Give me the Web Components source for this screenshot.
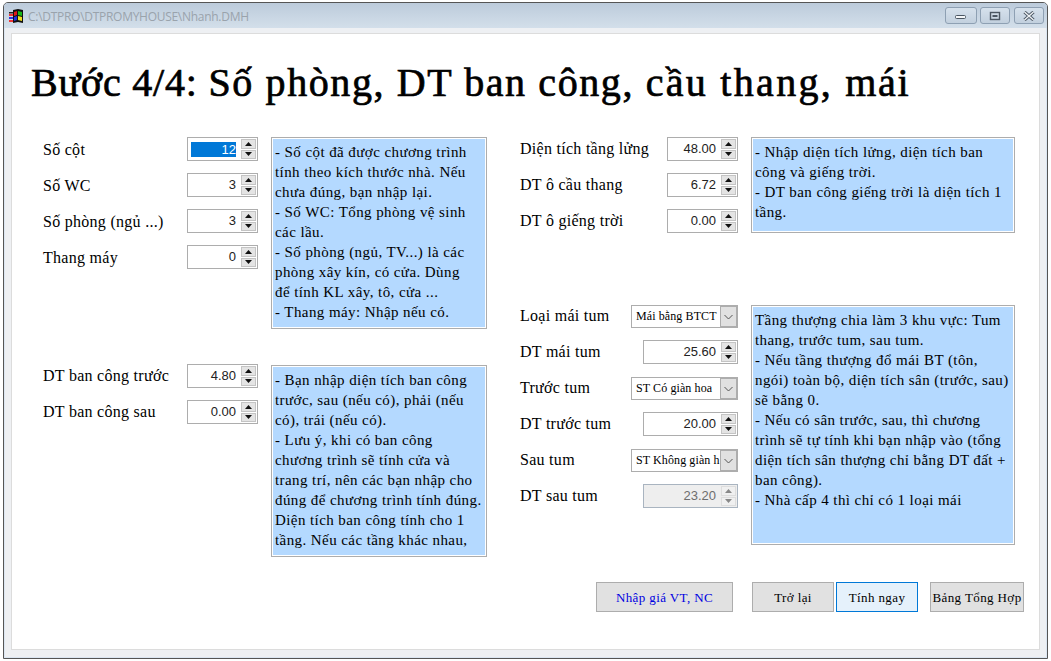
<!DOCTYPE html>
<html>
<head>
<meta charset="utf-8">
<style>
  html, body { margin: 0; background: #fff; }
  body { font-family: "Liberation Serif", "Times New Roman", serif; color: #000; }
</style>
</head>
<body>
<app-window title="C:\DTPRO\DTPROMYHOUSE\Nhanh.DMH">
  <step-heading><span style="letter-spacing:.8px">Bước 4/4: </span>Số phòng, DT ban công, <span style="letter-spacing:2.3px">cầu thang, </span>mái</step-heading>
  <div slot="left">
    <form-section style="--fields:215px;--note:216px;--note-h:192px;--label-top:1px">
      <field-row label="Số cột"><spin-box value="12" selected></spin-box></field-row>
      <field-row label="Số WC"><spin-box value="3"></spin-box></field-row>
      <field-row label="Số phòng (ngủ ...)"><spin-box value="3"></spin-box></field-row>
      <field-row label="Thang máy"><spin-box value="0"></spin-box></field-row>
      <note-box slot="note">- Số cột đã được chương trình<br>tính theo kích thước nhà. Nếu<br>chưa đúng, bạn nhập lại.<br>- Số WC: Tổng phòng vệ sinh<br>các lầu.<br>- Số phòng (ngủ, TV...) là các<br>phòng xây kín, có cửa. Dùng<br>để tính KL xây, tô, cửa ...<br>- Thang máy: Nhập nếu có.</note-box>
    </form-section>
    <form-section style="--fields:215px;--note:216px;--note-h:192px;--rows-top:-1px;margin-top:36px">
      <field-row label="DT ban công trước"><spin-box value="4.80"></spin-box></field-row>
      <field-row label="DT ban công sau"><spin-box value="0.00"></spin-box></field-row>
      <note-box slot="note">- Bạn nhập diện tích ban công<br>trước, sau (nếu có), phải (nếu<br>có), trái (nếu có).<br>- Lưu ý, khi có ban công<br>chương trình sẽ tính cửa và<br>trang trí, nên các bạn nhập cho<br>đúng để chương trình tính đúng.<br>Diện tích ban công tính cho 1<br>tầng. Nếu các tầng khác nhau,</note-box>
    </form-section>
  </div>
  <div slot="right">
    <form-section style="--fields:218px;--note:264px;--note-h:96px">
      <field-row label="Diện tích tầng lửng"><spin-box value="48.00"></spin-box></field-row>
      <field-row label="DT ô cầu thang"><spin-box value="6.72"></spin-box></field-row>
      <field-row label="DT ô giếng trời"><spin-box value="0.00"></spin-box></field-row>
      <note-box slot="note">- Nhập diện tích lửng, diện tích ban<br>công và giếng trời.<br>- DT ban công giếng trời là diện tích 1<br>tầng.</note-box>
    </form-section>
    <form-section style="--fields:218px;--note:264px;--note-h:240px;--rows-top:-1px;margin-top:72px">
      <field-row label="Loại mái tum"><combo-box value="Mái bằng BTCT"></combo-box></field-row>
      <field-row label="DT mái tum"><spin-box value="25.60" wide></spin-box></field-row>
      <field-row label="Trước tum"><combo-box value="ST Có giàn hoa"></combo-box></field-row>
      <field-row label="DT trước tum"><spin-box value="20.00" wide></spin-box></field-row>
      <field-row label="Sau tum"><combo-box value="ST Không giàn h"></combo-box></field-row>
      <field-row label="DT sau tum"><spin-box value="23.20" wide disabled></spin-box></field-row>
      <note-box slot="note">Tầng thượng chia làm 3 khu vực: Tum<br>thang, trước tum, sau tum.<br>- Nếu tầng thượng đổ mái BT (tôn,<br>ngói) toàn bộ, diện tích sân (trước, sau)<br>sẽ bằng 0.<br>- Nếu có sân trước, sau, thì chương<br>trình sẽ tự tính khi bạn nhập vào (tổng<br>diện tích sân thượng chỉ bằng DT đất +<br>ban công).<br>- Nhà cấp 4 thì chỉ có 1 loại mái</note-box>
    </form-section>
  </div>
  <div slot="footer" style="display:flex;justify-content:flex-end;height:30px">
    <form-button style="--w:137px;--fg:#0000e0;margin-right:19px">Nhập giá VT, NC</form-button>
    <form-button style="--w:82px;margin-right:2px">Trở lại</form-button>
    <form-button style="--w:82px;margin-right:12px" focused>Tính ngay</form-button>
    <form-button style="--w:94px">Bảng Tổng Hợp</form-button>
  </div>
</app-window>

<script>
class AppWindow extends HTMLElement {
  constructor() {
    super()
    this.attachShadow({ mode: 'open' })
  }

  connectedCallback() {
    const title = this.getAttribute('title')
    this.removeAttribute('title')
    this.shadowRoot.innerHTML = `
      <style>
        :host { display: block; width: 1045px; height: 657px; margin: 2px 0 0 3px; box-sizing: border-box;
          border: 1px solid #555; border-radius: 5px 5px 0 0; background: #eef0f3; box-shadow: inset 0 0 0 1px #dbe6f2; }
        .bar { display: flex; align-items: flex-start; box-sizing: border-box; height: 25px; margin-bottom: 5px; padding: 4px 3px 0 4px;
          border-radius: 4px 4px 0 0; background: linear-gradient(#bccbdb, #d3dfea); }
        .icon { width: 16px; height: 16px; margin: 1px 4px 0 0; }
        .title { font: 12px/20px "Open Sans", "Liberation Sans", sans-serif; color: #9aa3ac; flex: 1; letter-spacing: -.28px; }
        .ctrls { display: flex; }
        .ctrl { box-sizing: border-box; height: 17px; border: 1px solid #8ea0b3; border-radius: 3px;
          background: linear-gradient(#d6e1ec, #c2d0de); display: flex; align-items: center; justify-content: center; }
        .min { width: 32px; margin-right: 3px; }
        .max { width: 30px; margin-right: 4px; }
        .close { width: 30px; }
        .client { box-sizing: border-box; width: 1029px; height: 617px; margin: 0 0 0 7px; background: #fff; border: 1px solid #dcdcdc;
          display: grid; grid-template-columns: 445px 1fr; column-gap: 32px; grid-template-rows: 103px 1fr 30px;
          padding: 0 15px 37px 31px; }
        .head { grid-column: 1 / 3; margin-left: -12px; }
        .foot { grid-column: 1 / 3; }
      </style>
      <div class="bar">
        <svg class="icon" viewBox="0 0 16 16">
          <rect x="1" y="4" width="4" height="1.5" fill="#222"/>
          <rect x="1" y="6" width="4" height="2" fill="#e33"/>
          <rect x="1" y="9" width="4" height="2" fill="#33d"/>
          <rect x="1" y="12" width="4" height="2" fill="#e33"/>
          <path d="M5 2l5-1 5 1v13l-5-1-5 1z" fill="#111"/>
          <path d="M6 4l3-1v4l-3 1z" fill="#e01818"/>
          <path d="M10 3l4 1v4l-4-1z" fill="#18b818"/>
          <path d="M6 9l3-1v4l-3 1z" fill="#2030e0"/>
          <path d="M10 8l4 1v4l-4-1z" fill="#f0e020"/>
        </svg>
        <div class="title">${title}</div>
        <div class="ctrls">
          <div class="ctrl min"><svg width="12" height="8"><rect x=".5" y="3.5" width="10" height="3" rx="1" fill="#f4f6f8" stroke="#4a5662"/></svg></div>
          <div class="ctrl max"><svg width="12" height="10"><rect x="1.5" y="1.5" width="9" height="7" fill="none" stroke="#4a5662" stroke-width="1.4"/><rect x="3.5" y="4" width="5" height="2" fill="#4a5662"/></svg></div>
          <div class="ctrl close"><svg width="12" height="10" viewBox="0 0 12 10"><path d="M1.5 1l9 8M10.5 1l-9 8" stroke="#4a5662" stroke-width="3.2"/><path d="M1.5 1l9 8M10.5 1l-9 8" stroke="#f0f3f6" stroke-width="1.4"/></svg></div>
        </div>
      </div>
      <div class="client">
        <div class="head"><slot></slot></div>
        <div><slot name="left"></slot></div>
        <div><slot name="right"></slot></div>
        <div class="foot"><slot name="footer"></slot></div>
      </div>
    `
  }
}

class StepHeading extends HTMLElement {
  constructor() {
    super()
    this.attachShadow({ mode: 'open' }).innerHTML = `
      <style>
        :host { display: block; font: 40px/44px "Liberation Serif", "Times New Roman", serif; -webkit-text-stroke: .7px #000; padding-top: 27px; white-space: nowrap; letter-spacing: 1.6px; }
      </style>
      <slot></slot>
    `
  }
}

class FormSection extends HTMLElement {
  constructor() {
    super()
    this.attachShadow({ mode: 'open' }).innerHTML = `
      <style>
        :host { display: grid; grid-template-columns: var(--fields) var(--note); column-gap: 13px; height: var(--note-h); }
        .rows { display: flex; flex-direction: column; gap: 12px; margin-top: var(--rows-top, 0); }
      </style>
      <div class="rows"><slot></slot></div>
      <slot name="note"></slot>
    `
  }
}

class FieldRow extends HTMLElement {
  constructor() {
    super()
    this.attachShadow({ mode: 'open' })
  }

  connectedCallback() {
    this.shadowRoot.innerHTML = `
      <style>
        :host { display: flex; align-items: center; justify-content: space-between; height: 24px; }
        .label { font-size: 16px; letter-spacing: .28px; white-space: nowrap; position: relative; top: var(--label-top, 0); }
      </style>
      <span class="label">${this.getAttribute('label')}</span>
      <slot></slot>
    `
  }
}

class SpinBox extends HTMLElement {
  constructor() {
    super()
    this.attachShadow({ mode: 'open' })
  }

  connectedCallback() {
    const value = this.getAttribute('value')
    this.shadowRoot.innerHTML = `
      <style>
        :host { display: flex; align-items: center; box-sizing: border-box; width: 71px; height: 24px; border: 1px solid #adadad; background: #fff;
          padding: 2px 1px 2px 3px; font: 13px "Liberation Sans", Arial, sans-serif; color: #222; }
        :host([wide]) { width: 95px; }
        :host([disabled]) { background: #eee; color: #6d6d6d; border-color: #a9b4c0; }
        .val { flex: 1; text-align: right; padding-right: 5px; line-height: 18px; }
        :host([selected]) .val { background: #0078d7; color: #fff; padding-right: 0; margin-right: 5px; height: 15px; line-height: 15px; }
        .btns { display: flex; flex-direction: column; gap: 1px; width: 15px; }
        .btn { box-sizing: border-box; height: 9.5px; background: #e4e4e4; border: 1px solid #c4c4c4; display: flex; align-items: center; justify-content: center; }
        :host([disabled]) .btn { background: #f0f0f0; border-color: #ddd; }
        .btn svg { display: block; fill: #111; }
        :host([disabled]) .btn svg { fill: #888; }
      </style>
      <span class="val">${value}</span>
      <div class="btns">
        <div class="btn"><svg width="7" height="4"><path d="M3.5 0L7 4H0z"/></svg></div>
        <div class="btn"><svg width="7" height="4"><path d="M3.5 4L7 0H0z"/></svg></div>
      </div>
    `
  }
}

class ComboBox extends HTMLElement {
  constructor() {
    super()
    this.attachShadow({ mode: 'open' })
  }

  connectedCallback() {
    this.shadowRoot.innerHTML = `
      <style>
        :host { display: flex; align-items: center; box-sizing: border-box; width: 107px; height: 23px; border: 1px solid #adadad; background: #fff;
          padding-left: 4px; margin-top: 1px; font-size: 12px; letter-spacing: .1px; }
        .val { flex: 1; min-width: 0; white-space: nowrap; }
        .arrow { box-sizing: border-box; width: 17px; height: 21px; background: #e1e1e1; border: 1px solid #adadad; display: flex; align-items: center; justify-content: center; }
      </style>
      <span class="val">${this.getAttribute('value')}</span>
      <div class="arrow"><svg width="9" height="6"><path d="M.5 1l4 4 4-4" fill="none" stroke="#555" stroke-width="1"/></svg></div>
    `
  }
}

class NoteBox extends HTMLElement {
  constructor() {
    super()
    this.attachShadow({ mode: 'open' }).innerHTML = `
      <style>
        :host { display: block; box-sizing: border-box; height: var(--note-h); border: 1px solid #adadad; padding: 1px; background: #fff; }
        .in { box-sizing: border-box; height: 100%; background: #b4d9ff; padding: 3px 2px; font-size: 15px; line-height: 20px; letter-spacing: .42px; white-space: nowrap; overflow: hidden; }
      </style>
      <div class="in"><slot></slot></div>
    `
  }
}

class FormButton extends HTMLElement {
  constructor() {
    super()
    this.attachShadow({ mode: 'open' }).innerHTML = `
      <style>
        :host { display: flex; align-items: center; justify-content: center; box-sizing: border-box; width: var(--w); height: 30px; padding-top: 2px;
          border: 1px solid #adadad; background: #e1e1e1; color: var(--fg, #000); font-size: 13px; letter-spacing: .4px; white-space: nowrap; }
        :host([focused]) { border-color: #0078d7; background: #e5f1fb; }
      </style>
      <slot></slot>
    `
  }
}

customElements.define('app-window', AppWindow)
customElements.define('step-heading', StepHeading)
customElements.define('form-section', FormSection)
customElements.define('field-row', FieldRow)
customElements.define('spin-box', SpinBox)
customElements.define('combo-box', ComboBox)
customElements.define('note-box', NoteBox)
customElements.define('form-button', FormButton)
</script>
</body>
</html>
